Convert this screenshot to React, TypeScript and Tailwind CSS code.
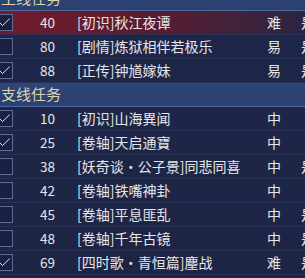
import { Check } from 'lucide-react';

type Task = { lv: number; title: string; diff: string; done?: string; checked: boolean; active?: boolean };

const mainTasks: Task[] = [
  { lv: 40, title: '[初识]秋江夜谭', diff: '难', done: '是', checked: true, active: true },
  { lv: 80, title: '[剧情]炼狱相伴若极乐', diff: '易', done: '是', checked: false },
  { lv: 88, title: '[正传]钟馗嫁妹', diff: '易', done: '是', checked: true },
];

const sideTasks: Task[] = [
  { lv: 10, title: '[初识]山海異闻', diff: '中', checked: true },
  { lv: 25, title: '[卷轴]天启通寶', diff: '中', checked: true },
  { lv: 38, title: '[妖奇谈·公子景]同悲同喜', diff: '中', done: '是', checked: false },
  { lv: 42, title: '[卷轴]铁嘴神卦', diff: '中', checked: false },
  { lv: 45, title: '[卷轴]平息匪乱', diff: '中', done: '是', checked: false },
  { lv: 48, title: '[卷轴]千年古镜', diff: '中', done: '是', checked: false },
  { lv: 69, title: '[四时歌·青恒篇]麈战', diff: '难', done: '是', checked: true },
];

function Header({ label, first }: { label: string; first?: boolean }) {
  return (
    <div className={`flex h-[24px] shrink-0 items-center border-b border-[#4d6a9e] bg-gradient-to-b from-[#2e4576] to-[#2b406f] pl-[1px] text-[15px] text-[#dcd6ae] ${first ? '-mt-[13px]' : ''}`}>
      {label}
    </div>
  );
}

function Row({ t }: { t: Task }) {
  return (
    <div
      className={`flex h-[24px] shrink-0 items-center border-b border-[#283256] text-[14px] text-[#e6e6ea] ${
        t.active ? 'bg-gradient-to-r from-[#731a2b] via-[#5a1b30] to-[#2a2442]' : ''
      }`}
    >
      <div className="-ml-[4px] flex h-[17px] w-[17px] shrink-0 items-center justify-center border border-[#5d6b95] bg-[#1a2040]">
        {t.checked && <Check size={15} strokeWidth={1.6} className="text-[#e8e8ee]" />}
      </div>
      <div className="w-[42px] shrink-0 text-right text-[13.5px]">{t.lv}</div>
      <div className="ml-[22px] w-[188px] shrink-0 whitespace-nowrap">{t.title}</div>
      <div className="w-[18px] shrink-0 text-center">{t.diff}</div>
      <div className="ml-[18px] shrink-0">{t.done ?? ''}</div>
    </div>
  );
}

export default function App() {
  return (
    <div
      className="flex h-[278px] w-[305px] flex-col overflow-hidden bg-gradient-to-b from-[#1f2748] to-[#1d2444]"
      style={{ fontFamily: '"Noto Sans CJK SC", "Noto Sans", sans-serif' }}
    >
      <Header label="主线任务" first />
      {mainTasks.map((t) => (
        <Row key={t.lv} t={t} />
      ))}
      <Header label="支线任务" />
      {sideTasks.map((t) => (
        <Row key={t.lv} t={t} />
      ))}
      <Row t={{ lv: 70, title: '', diff: '', checked: false }} />
    </div>
  );
}
